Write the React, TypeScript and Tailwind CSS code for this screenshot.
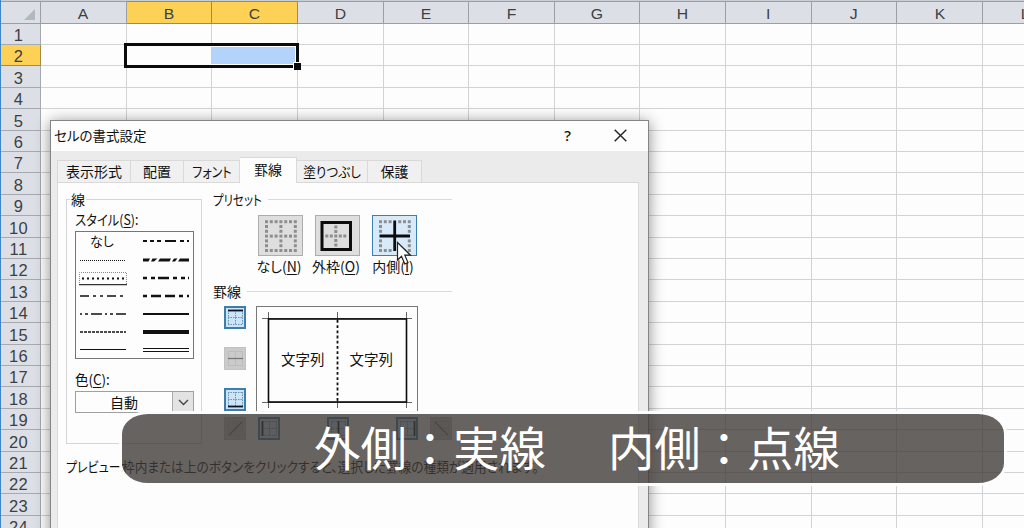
import React from "react";

const COLS = ["A", "B", "C", "D", "E", "F", "G", "H", "I", "J", "K", "L"];
const ROWS = Array.from({ length: 24 }, (_, i) => i + 1);

function Sheet() {
  return (
    <div className="w-[1069px] border-l border-[#3f86c8] font-['Liberation_Sans',sans-serif] text-[#3c4044]">
      <div className="grid h-[23.5px] grid-cols-[40px_repeat(12,85.64px)] border-t border-[#c9ced4] bg-[#dce0e6]">
        <div className="flex items-end justify-end border-t border-r border-b border-[#9a9fa6] px-[5px] pb-[3px]">
          <svg width="11" height="11" viewBox="0 0 11 11">
            <path d="M11 0V11H0Z" fill="#b4b8bd" />
          </svg>
        </div>
        {COLS.map((c) => {
          const on = c === "B" || c === "C";
          return (
            <div
              key={c}
              className={
                on
                  ? "flex items-center justify-center border-t border-r border-b border-[#a88a45] bg-[#fdd155] pt-0.5 text-[15px] leading-none"
                  : "flex items-center justify-center border-t border-r border-b border-[#9a9fa6] pt-0.5 text-[15px] leading-none"
              }
            >
              <span className="scale-x-105">{c}</span>
            </div>
          );
        })}
      </div>
      {ROWS.map((r) => (
        <div key={r} className="grid h-[21.41px] grid-cols-[40px_repeat(12,85.64px)]">
          <div
            className={
              r === 2
                ? "flex items-center justify-center border-r border-b border-[#a88a45] bg-[#fdd155] pr-1 pt-[3px] text-[16.5px] leading-none tracking-[0.4px]"
                : "flex items-center justify-center border-r border-b border-[#a5aab0] bg-[#dce0e6] pr-1 pt-[3px] text-[16.5px] leading-none tracking-[0.4px]"
            }
          >
            {r}
          </div>
          {COLS.map((c) => (
            <div key={c} className="border-r border-b border-[#d2d3d5] bg-[#fdfdfd]" />
          ))}
        </div>
      ))}
    </div>
  );
}

function Selection() {
  return (
    <div className="absolute top-[43px] left-[124px] h-[25px] w-[175px] border-[3px] border-[#0b0b0b] bg-[#fdfdfd] p-px">
      <div className="ml-[83px] h-full bg-[#b3d3fb]" />
      <div className="absolute -right-[5px] -bottom-[5px] h-2 w-2 border-t border-l border-white bg-[#0b0b0b]" />
    </div>
  );
}

function Tab({ label, cls, text = "" }: { label: string; cls: string; text?: string }) {
  return (
    <div className={`flex items-center justify-center border-t border-r border-[#d9d9d9] ${cls}`}>
      <span className={`whitespace-nowrap ${text}`}>{label}</span>
    </div>
  );
}

const STYLE_LINES: { x: number; y: number; w: number; dash?: string }[] = [
  { x: 4, y: 28.5, w: 1, dash: "1 1" },
  { x: 6, y: 46.5, w: 2, dash: "2 3" },
  { x: 4, y: 64, w: 1.5, dash: "9 4 3 4 3 4" },
  { x: 4, y: 82, w: 1.5, dash: "2 3 3 3 11 3" },
  { x: 4, y: 100, w: 1.5, dash: "3 1" },
  { x: 4, y: 117.5, w: 1 },
  { x: 67, y: 9, w: 2, dash: "4 3 4 3 4 4 11 4" },
  { x: 67, y: 46, w: 2.5, dash: "4 4 4 3 11 4" },
  { x: 67, y: 64, w: 2.5, dash: "4 4 10 4 10 4" },
  { x: 67, y: 82, w: 2.2 },
  { x: 67, y: 100, w: 4 },
];

function StyleList() {
  return (
    <div className="relative h-[128px] w-[119px] border border-[#767676] bg-[#fdfdfd]">
      <svg width="117" height="126" viewBox="0 0 117 126" className="block">
        <g stroke="#111">
          {STYLE_LINES.map((l, i) => (
            <line key={i} x1={l.x} x2={l.x > 60 ? 113 : 50} y1={l.y} y2={l.y} strokeWidth={l.w} strokeDasharray={l.dash} />
          ))}
          <path d="M67 116.5H113M67 119.5H113" strokeWidth="1.2" />
          <path d="M3.5 53V40.5H50.5V53" fill="none" stroke="#888" strokeDasharray="1 1" />
          <path d="M3 52.7H51" stroke="#333" strokeWidth="1.2" />
        </g>
        <path
          d="M67 29.5V26.5H74L72.5 29.5ZM75 29.5L76.5 26.5H81.5L78 29.5ZM82 29.5L84 26.5H95L93.5 29.5ZM96 29.5L98 26.5H101.5L99 29.5ZM102 29.5L104 26.5H113V29.5Z"
          fill="#111"
        />
      </svg>
      <span className="absolute top-0 left-[14px] text-[13px] leading-[18px]">なし</span>
    </div>
  );
}

type PresetKind = "none" | "outline" | "inside";

function isDot(kind: PresetKind, c: number, r: number) {
  const edge = c === 0 || c === 6 || r === 0 || r === 6;
  const mid = c === 3 || r === 3;
  if (kind === "none") return edge || mid;
  if (kind === "inside") return edge && !mid;
  return mid && !edge;
}

const STEPS = [0, 1, 2, 3, 4, 5, 6];

function DotGrid({ kind }: { kind: PresetKind }) {
  const step = kind === "outline" ? 4.5 : 4.8;
  const x0 = kind === "outline" ? 4.8 : 6;
  const y0 = kind === "outline" ? 5 : 4.2;
  return (
    <svg width="43" height="40" viewBox="0 0 43 40">
      {STEPS.flatMap((r) =>
        STEPS.filter((c) => isDot(kind, c, r)).map((c) => (
          <rect key={`${c}-${r}`} x={x0 + c * step} y={y0 + r * step} width="3" height="3" fill="#8e8e8e" />
        )),
      )}
      {kind === "outline" && <rect x="6" y="6.5" width="28.5" height="27" fill="none" stroke="#0c0c0c" strokeWidth="3" />}
      {kind === "inside" && <path d="M6.5 20H37M21.7 4.5V35" stroke="#0c0c0c" strokeWidth="2.8" />}
    </svg>
  );
}

function Preset({ kind, text, mnem }: { kind: PresetKind; text: string; mnem: string }) {
  return (
    <div className="flex w-[57px] flex-col items-start">
      <div
        className={
          kind === "inside"
            ? "h-[41px] w-[45px] border border-[#3c7fb1] bg-[#d6eafa]"
            : "h-[41px] w-[45px] border border-[#adadad] bg-[#dedede]"
        }
      >
        <DotGrid kind={kind} />
      </div>
      <div className="flex h-5 w-[42px] items-center justify-center whitespace-nowrap">
        {text}(<u className="underline-offset-2">{mnem}</u>)
      </div>
    </div>
  );
}

type Edge = "top" | "mid" | "bottom" | "left" | "center" | "right" | "up" | "down";
const EDGE_PATH: Record<Edge, string> = {
  top: "M3 3.5H18",
  mid: "M3 10.5H18",
  bottom: "M3 17.5H18",
  left: "M3.5 3V18",
  center: "M10.5 3V18",
  right: "M17.5 3V18",
  up: "M4 17L17 4",
  down: "M4 4L17 17",
};

function EdgeButton({ edge }: { edge: Edge }) {
  const off = edge === "mid" || edge === "up" || edge === "down";
  return (
    <div className={off ? "h-[23px] w-[22px] border border-[#c2c2c2] bg-[#cacaca]" : "h-[23px] w-[22px] border-2 border-[#3d7eb0] bg-[#cbe4f8]"}>
      <svg width="21" height="21" viewBox="0 0 21 21" className={off ? "block" : "-mt-px -ml-px block"}>
        <path
          d="M3.5 3V18M10.5 3V18M17.5 3V18M3 3.5H18M3 10.5H18M3 17.5H18"
          stroke={off ? "#bcbcbc" : "#6d93b3"}
          strokeDasharray={off ? undefined : "1.5 1"}
        />
        <path d={EDGE_PATH[edge]} stroke={off ? "#777" : "#0b1420"} strokeWidth={off ? 1.3 : 1.8} />
      </svg>
    </div>
  );
}

function PreviewBox() {
  return (
    <div className="grid h-[106px] w-[162px] border border-[#777] bg-[#fdfdfd]">
      <svg width="160" height="104" viewBox="0 0 160 104" className="col-start-1 row-start-1">
        <g stroke="#666" strokeWidth="1">
          <path d="M5 11.5H155M5 95.5H155M11.5 5V101M149.5 5V101M80.5 5V15M80.5 92V101" />
        </g>
        <rect x="11.5" y="12" width="138" height="83" fill="none" stroke="#0a0a0a" strokeWidth="1.6" />
        <path d="M80.5 13V94" stroke="#111" strokeWidth="1.8" strokeDasharray="2.8 2.4" />
      </svg>
      <div className="z-0 col-start-1 row-start-1 flex justify-between pt-[41px] pr-[24px] pl-[24px] text-[14.5px] leading-[22px]">
        <span>文字列</span>
        <span>文字列</span>
      </div>
    </div>
  );
}

function Heading({ text, cls }: { text: string; cls: string }) {
  return (
    <div className="flex h-5 w-[239px] items-center gap-1.5">
      <span className={`shrink-0 whitespace-nowrap ${cls}`}>{text}</span>
      <span className="h-px flex-1 bg-[#dadada]" />
    </div>
  );
}

function Dialog() {
  return (
    <div className="absolute top-[120px] left-[50px] h-[440px] w-[599px] border border-[#858585] bg-[#ebebeb] font-['Noto_Sans_CJK_JP',sans-serif] text-[14px] leading-5 text-[#111] shadow-[0_2px_14px_rgba(0,0,0,0.45)] [font-feature-settings:'palt']">
      <div className="flex h-[30px] items-center justify-between bg-[#fdfdfd] pr-[21px] pb-[2px] pl-[3px]">
        <span className="text-[13.5px]">セルの書式設定</span>
        <div className="flex items-center gap-[43px]">
          <span className="font-['Noto_Sans',sans-serif] text-[15px] font-medium">?</span>
          <svg width="13" height="13" viewBox="0 0 13 13">
            <path d="M.7.7L12.3 12.3M12.3.7L.7 12.3" stroke="#222" strokeWidth="1.4" />
          </svg>
        </div>
      </div>
      <div className="flex h-[31px] items-end pl-1.5">
        <Tab label="表示形式" cls="h-[22px] w-[74px] border-l bg-[#f0f0f0] pb-0.5" />
        <Tab label="配置" cls="h-[22px] w-[53px] bg-[#f0f0f0] pb-0.5" />
        <Tab label="フォント" cls="h-[22px] w-[56px] bg-[#f0f0f0] pb-0.5" text="-mx-2 scale-x-[0.86]" />
        <Tab label="罫線" cls="relative -mb-px h-[26px] w-[57px] bg-[#fdfdfd] pb-[3px]" />
        <Tab label="塗りつぶし" cls="h-[22px] w-[71px] bg-[#f0f0f0] pb-0.5" text="scale-x-[0.9]" />
        <Tab label="保護" cls="h-[22px] w-[54px] bg-[#f0f0f0] pb-0.5" />
      </div>
      <div className="mr-[9px] ml-1.5 h-[380px] border border-[#d9d9d9] bg-[#fdfdfd] px-2 pt-1.5">
        <div className="flex gap-[11px]">
          <fieldset className="h-[255px] w-[136px] border border-[#d6d6d6] pl-2">
            <legend className="-ml-[5px] h-5 px-px text-[14px]">線</legend>
            <div className="h-[22px] w-max origin-left scale-x-[0.88]">
              スタイル(<u className="underline-offset-2">S</u>):
            </div>
            <StyleList />
            <div className="mt-[10px] h-[22px] w-max origin-left scale-x-[0.96]">
              色(<u className="underline-offset-2">C</u>):
            </div>
            <div className="flex h-[22px] w-[119px] border border-[#a0a0a0]">
              <span className="flex-1 text-center">自動</span>
              <span className="flex w-[21px] items-center justify-center border-l border-[#adadad] bg-[#e3e3e3]">
                <svg width="11" height="7" viewBox="0 0 11 7">
                  <path d="M1 1L5.5 5.5L10 1" fill="none" stroke="#444" strokeWidth="1.4" />
                </svg>
              </span>
            </div>
          </fieldset>
          <div className="flex flex-col">
            <Heading text="プリセット" cls="w-[49px] origin-left scale-x-[0.82]" />
            <div className="mt-1.5 flex pl-[45px]">
              <Preset kind="none" text="なし" mnem="N" />
              <Preset kind="outline" text="外枠" mnem="O" />
              <Preset kind="inside" text="内側" mnem="I" />
            </div>
            <div className="mt-[5px]">
              <Heading text="罫線" cls="" />
            </div>
            <div className="mt-[5px] flex gap-[10px] pl-[11px]">
              <div className="flex flex-col gap-[18px]">
                <EdgeButton edge="top" />
                <EdgeButton edge="mid" />
                <EdgeButton edge="bottom" />
              </div>
              <PreviewBox />
            </div>
            <div className="mt-[5px] flex pl-[11px]">
              <EdgeButton edge="up" />
              <div className="ml-3 flex w-[160px] justify-between">
                <EdgeButton edge="left" />
                <EdgeButton edge="center" />
                <EdgeButton edge="right" />
              </div>
              <div className="ml-3">
                <EdgeButton edge="down" />
              </div>
            </div>
          </div>
        </div>
        <div className="mt-[12px] flex whitespace-nowrap">
          <span className="w-[56px] origin-left scale-x-[0.86]">プレビュー:</span>
          <span className="origin-left scale-x-[0.905]">枠内または上のボタンをクリックすると、選択した罫線の種類が適用されます。</span>
        </div>
      </div>
    </div>
  );
}

export default function App() {
  return (
    <div className="relative h-[528px] w-[1024px] overflow-hidden bg-[#fdfdfd]">
      <Sheet />
      <Selection />
      <Dialog />
      <svg className="absolute top-[241px] left-[396px]" width="16" height="25" viewBox="0 0 16 25">
        <path d="M1.5 1.5V19L5.5 15.2L8.8 23L12 21.6L8.8 14.2H14.5Z" fill="#fff" stroke="#222" strokeWidth="1.2" />
      </svg>
      <div className="absolute top-[414px] left-[122px] flex h-[69px] w-[882px] items-center gap-[62px] rounded-[26px/20px] bg-[rgba(62,57,53,0.79)] pb-1 pl-[192px] font-['Noto_Sans_CJK_JP',sans-serif] text-[46.4px] leading-none whitespace-nowrap text-white shadow-[0_0_0_3px_rgba(253,253,253,0.95)]">
        <span>外側：実線</span>
        <span>内側：点線</span>
      </div>
    </div>
  );
}
